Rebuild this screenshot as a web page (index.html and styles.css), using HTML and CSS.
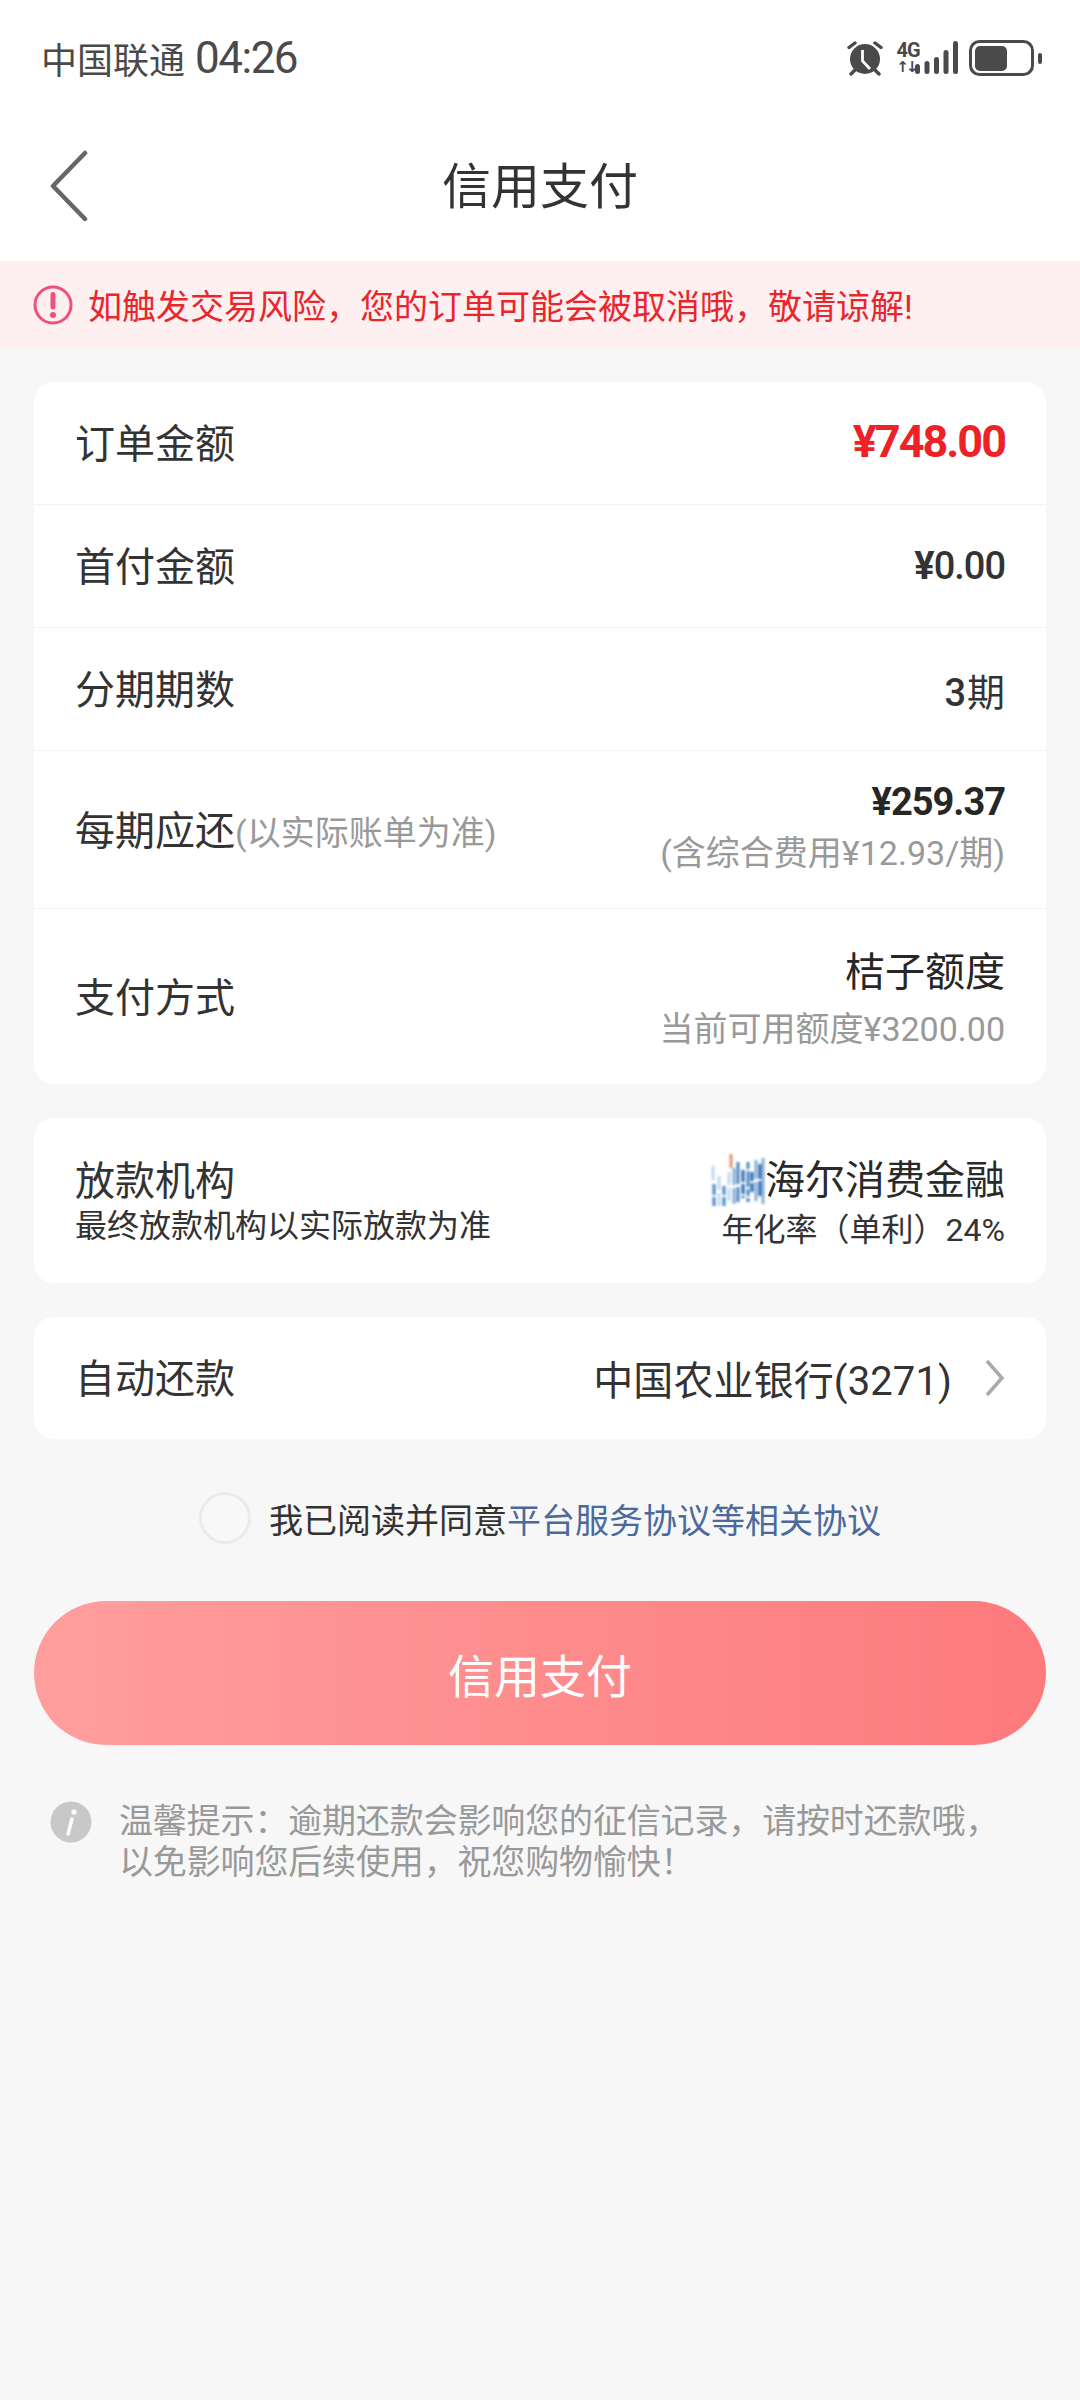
FILE: index.html
```html
<!DOCTYPE html>
<html lang="zh-CN">
<head>
<meta charset="utf-8">
<title>信用支付</title>
<link rel="stylesheet" href="styles.css">
</head>
<body>
<div class="top">
  <div class="status">
    <div class="status-left"><span>中国联通</span><span class="time">04:26</span></div>
    <div class="status-right">
      <svg class="ic-alarm" viewBox="0 0 36 36" width="36" height="36">
        <path d="M2 7.500 L8 3 M34 7.500 L28 3" stroke="#4a4a4a" stroke-width="3.400" stroke-linecap="round"/>
        <path d="M8 30 L4 34 M28 30 L32 34" stroke="#4a4a4a" stroke-width="3.400" stroke-linecap="round"/>
        <circle cx="18" cy="19" r="15" fill="#4a4a4a"/>
        <path d="M15.500 10 V21 L23 29" fill="none" stroke="#fff" stroke-width="2.800"/>
      </svg>
      <div class="net"><span class="net-4g">4G</span><span class="net-arrows">↑↓</span></div>
      <svg class="ic-signal" viewBox="0 0 44 34" width="44" height="34">
        <rect x="0" y="23" width="5" height="10" rx="2.500" fill="#4a4a4a"/>
        <rect x="9.500" y="20" width="5" height="13" rx="2.500" fill="#4a4a4a"/>
        <rect x="19" y="16" width="5" height="17" rx="2.500" fill="#4a4a4a"/>
        <rect x="28.500" y="9" width="5" height="24" rx="2.500" fill="#4a4a4a"/>
        <rect x="38" y="0" width="5" height="33" rx="2.500" fill="#4a4a4a"/>
      </svg>
      <svg class="ic-battery" viewBox="0 0 74 36" width="74" height="36">
        <rect x="1.500" y="1.500" width="62" height="33" rx="9" fill="none" stroke="#4a4a4a" stroke-width="3"/>
        <rect x="6" y="6" width="32" height="25" rx="5" fill="#4a4a4a"/>
        <rect x="69" y="13" width="4" height="11" rx="2" fill="#4a4a4a"/>
      </svg>
    </div>
  </div>
  <div class="nav">
    <svg class="back" viewBox="0 0 40 72" width="40" height="72"><path d="M36 3 L4 36 L36 69" fill="none" stroke="#666" stroke-width="4.500" stroke-linecap="round" stroke-linejoin="round"/></svg>
    <div class="nav-title">信用支付</div>
  </div>
</div>
<div class="notice">
  <svg class="notice-ic" viewBox="0 0 40 40" width="40" height="40">
    <circle cx="20" cy="20" r="18" fill="none" stroke="#f0517a" stroke-width="3"/>
    <path d="M20 9.500 V22" stroke="#f0517a" stroke-width="5" stroke-linecap="round"/>
    <circle cx="20" cy="30" r="3" fill="#f0517a"/>
  </svg>
  <span>如触发交易风险，您的订单可能会被取消哦，敬请谅解!</span>
</div>
<main class="content">
  <section class="card">
    <div class="row row-s"><div class="label">订单金额</div><div class="val-red">¥748.00</div></div>
    <div class="row row-s"><div class="label">首付金额</div><div class="val-m"><b>¥</b>0.00</div></div>
    <div class="row row-s"><div class="label">分期期数</div><div class="val-m">3<span class="unit">期</span></div></div>
    <div class="row row-m">
      <div class="label">每期应还<span class="label-note">(以实际账单为准)</span></div>
      <div class="stack"><div class="val-b">¥259.37</div><div class="sub">(含综合费用¥12.93/期)</div></div>
    </div>
    <div class="row row-l">
      <div class="label">支付方式</div>
      <div class="stack stack-l"><div class="val-n">桔子额度</div><div class="sub">当前可用额度¥3200.00</div></div>
    </div>
  </section>
  <section class="card card-org">
    <div class="org-left"><div class="org-label">放款机构</div><div class="small">最终放款机构以实际放款为准</div></div>
    <div class="org-right">
      <div class="org-name">
        <svg class="org-logo" viewBox="0 0 54 56" width="54" height="56">
          <g class="logo-stripes">
            <path class="s-a" d="M2 12 V26"/>
            <path class="s-c" d="M3 30 V54" stroke-dasharray="11 2 9"/>
            <path class="s-a" d="M8 22 V52" stroke-dasharray="14 3"/>
            <path class="s-c" d="M13 32 V54" stroke-dasharray="9 2"/>
            <path class="s-a" d="M18 18 V48" stroke-dasharray="13 3"/>
            <path class="s-o" d="M20 0 V14"/>
            <path class="s-b" d="M23 14 V50" stroke-dasharray="17 3"/>
            <path class="s-c" d="M27 8 V48" stroke-dasharray="22 3"/>
            <path class="s-d" d="M32 16 V44" stroke-dasharray="12 2 10 2"/>
            <path class="s-c" d="M37 8 V48" stroke-dasharray="7 2 16 2"/>
            <path class="s-d" d="M41 18 V40" stroke-dasharray="9 2"/>
            <path class="s-b" d="M45 6 V50" stroke-dasharray="19 3"/>
            <path class="s-d" d="M49 10 V44" stroke-dasharray="15 2"/>
            <path class="s-b" d="M52 4 V50"/>
          </g>
        </svg>
        <span>海尔消费金融</span>
      </div>
      <div class="small">年化率（单利）24%</div>
    </div>
  </section>
  <section class="card">
    <div class="row row-s row-bank">
      <div class="label">自动还款</div>
      <div class="bank"><span>中国农业银行(3271)</span>
        <svg class="chev" viewBox="0 0 20 38" width="20" height="38"><path d="M2 2 L17 19 L2 36" fill="none" stroke="#aaa" stroke-width="3.500"/></svg>
      </div>
    </div>
  </section>
  <div class="agree">
    <span class="radio"></span>
    <span>我已阅读并同意<span class="link">平台服务协议等相关协议</span></span>
  </div>
  <button class="pay">信用支付</button>
  <div class="tip">
    <svg class="tip-ic" viewBox="0 0 42 42" width="42" height="42">
      <circle cx="21" cy="21" r="20.500" fill="#c8c8c8"/>
      <path d="M22 18 L18 33" stroke="#fff" stroke-width="3.500" stroke-linecap="round"/>
      <circle cx="24" cy="11" r="2.600" fill="#fff"/>
    </svg>
    <p>温馨提示：逾期还款会影响您的征信记录，请按时还款哦，<br>以免影响您后续使用，祝您购物愉快！</p>
  </div>
</main>
</body>
</html>
```
FILE: styles.css
```css
* { box-sizing: border-box; }
html, body { margin: 0; padding: 0; }
body {
  width: 1080px;
  height: 2400px;
  overflow: hidden;
  background: #f7f7f7;
  color: #333;
  font-family: Roboto, "Noto Sans CJK SC", sans-serif;
}
.top { background: #fff; height: 261px; }
.status {
  height: 116px;
  padding: 0 37px 0 41px;
  display: flex;
  align-items: center;
  justify-content: space-between;
}
.status-left { display: flex; align-items: center; gap: 10px; font-size: 36px; color: #4a4a4a; }
.time { font-size: 44px; letter-spacing: -1.500px; }
.status-right { display: flex; align-items: center; }
.ic-alarm { margin-right: 12px; }
.net { display: flex; flex-direction: column; align-items: center; width: 26px; margin-right: -6px; margin-top: -1px; color: #4a4a4a; font-weight: 700; line-height: 1; }
.net-4g { font-size: 20px; letter-spacing: -1px; }
.net-arrows { font-size: 15px; letter-spacing: -3px; margin-left: -4px; font-family: "DejaVu Sans", sans-serif; font-weight: 700; }
.ic-signal { margin-right: 10px; }
.nav { position: relative; height: 145px; display: flex; align-items: center; justify-content: center; }
.back { position: absolute; left: 49px; top: 34px; }
.nav-title { font-size: 49px; color: #333; line-height: 1; margin-top: -2px; }
.notice {
  height: 87px;
  background: #feeff1;
  display: flex;
  align-items: center;
  padding-left: 33px;
  gap: 15px;
  font-size: 34px;
  color: #e8262c;
}
.content { padding: 34px 34px 0; }
.card { background: #fff; border-radius: 20px; margin-bottom: 34px; }
.row {
  display: flex;
  align-items: center;
  justify-content: space-between;
  padding: 0 41px;
  border-bottom: 1px solid #f3f3f3;
}
.row:last-child { border-bottom: 0; }
.row-s { height: 123px; }
.row-m { height: 158px; }
.row-l { height: 175px; }
.row-bank { height: 122px; }
.label { font-size: 40px; color: #333; line-height: 1.2; padding-top: 4px; }
.org-label { font-size: 40px; color: #333; line-height: 1.2; }
.label-note { font-size: 34px; color: #999; }
.val-red { font-size: 45px; font-weight: 700; letter-spacing: -2px; color: #ee2226; margin-top: -4px; }
.val-m { font-size: 38px; font-weight: 500; letter-spacing: -1px; color: #333; }
.val-m b { font-weight: 700; }
.unit { font-size: 38px; font-weight: 400; letter-spacing: 0; margin-left: 2px; }
.val-b { font-size: 38px; font-weight: 700; letter-spacing: -1px; color: #262626; }
.val-n { font-size: 40px; color: #262626; }
.stack { display: flex; flex-direction: column; align-items: flex-end; gap: 2px; padding-bottom: 4px; }
.stack-l { gap: 4px; padding-bottom: 2px; }
.sub { font-size: 34px; color: #999; }
.card-org { height: 165px; padding: 0 41px; display: flex; justify-content: space-between; align-items: center; }
.org-left, .org-right { display: flex; flex-direction: column; }
.org-left { padding-top: 3px; }
.org-right { align-items: flex-end; }
.small { font-size: 32px; color: #333; line-height: 1.25; }
.org-name { display: flex; align-items: center; font-size: 40px; color: #2a2a2a; line-height: 48px; }
.org-logo { filter: blur(0.8px); overflow: visible; margin-top: 2px; }
.logo-stripes path { fill: none; stroke-width: 3; }
.s-a { stroke: #c2d8ee; }
.s-b { stroke: #86afd9; }
.s-c { stroke: #4a85c4; }
.s-d { stroke: #2465ae; }
.s-o { stroke: #d9976f; }
.bank { display: flex; align-items: center; gap: 33px; font-size: 40px; letter-spacing: 0.1px; color: #333; }
.agree { display: flex; justify-content: center; align-items: center; gap: 18px; font-size: 34px; color: #333; height: 52px; margin-top: 53px; }
.radio { width: 52px; height: 52px; border-radius: 50%; border: 3px solid #ebebeb; background: #f8f8f8; }
.link { color: #4a6a9c; }
.pay {
  display: block;
  width: 100%;
  height: 144px;
  margin-top: 57px;
  border: 0;
  border-radius: 72px;
  background: linear-gradient(90deg, #ff9e9e, #fd7a7c);
  color: #fff;
  font-family: inherit;
  font-size: 46px;
}
.tip { display: flex; margin-top: 56px; padding-left: 16px; gap: 27px; }
.tip-ic { flex: none; }
.tip p { margin: 0; font-size: 34px; line-height: 41px; letter-spacing: -0.15px; color: #999; }
```
